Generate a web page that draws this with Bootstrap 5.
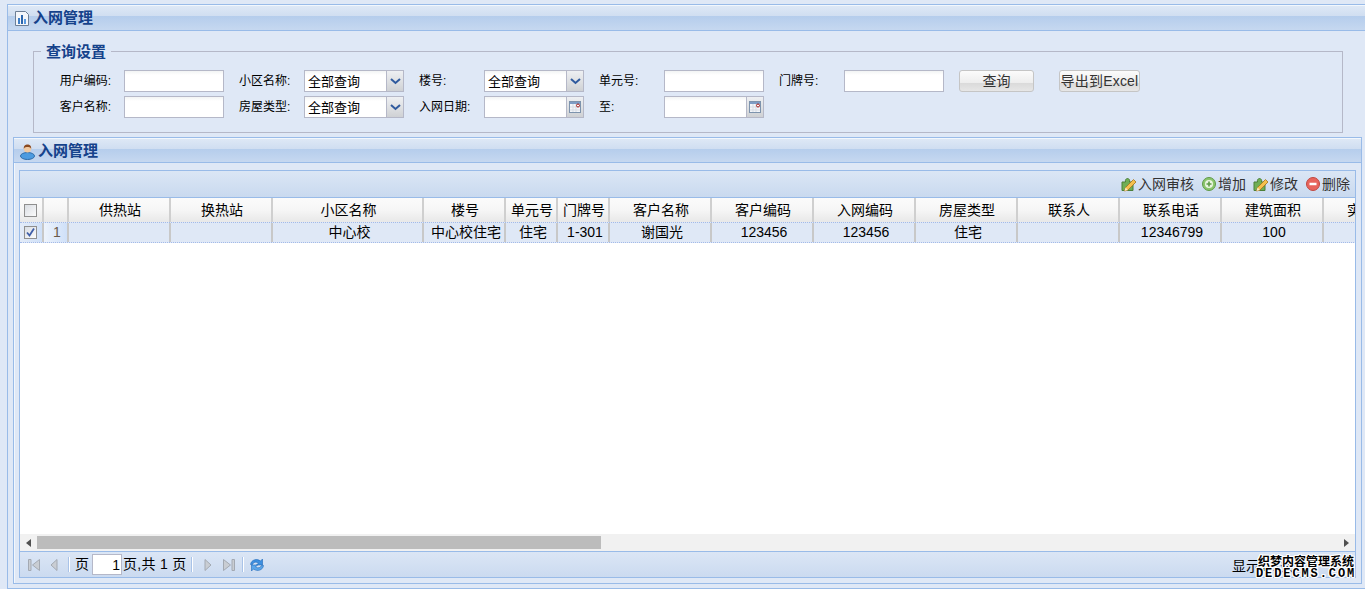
<!DOCTYPE html>
<html lang="zh">
<head>
<meta charset="UTF-8">
<title>入网管理</title>
<link rel="stylesheet" href="https://cdn.jsdelivr.net/npm/bootstrap@5.3.0/dist/css/bootstrap.min.css">
<style>
html, body { height: 589px; overflow: hidden; }
body { background: #dfe8f6; font-family: "Liberation Sans", "Noto Sans CJK SC", sans-serif; font-size: 13px; color: #000; padding: 4px 0 0 7px; position: relative; }
.panel-outer { border: 1px solid #99bbe8; border-right: 0; background: #dfe8f6; height: 585px; }
.panel-head { height: 26px; border-bottom: 1px solid #99bbe8; background: linear-gradient(#dfe9f6 0, #d0def1 44%, #b5cdec 45%, #c6d8f0 100%); box-shadow: inset 0 1px #f2f7fd; color: #15428b; font-weight: 700; font-size: 15px; gap: 3px; padding: 2px 0 0 6px; }
.query-box { margin: 20px 22px 0 25px; height: 82px; border: 1px solid #b5b8c8; position: relative; padding: 18px 0 0 24px; }
.query-title { position: absolute; left: 7px; top: -9px; padding: 0 5px; background: #dfe8f6; color: #15428b; font-weight: 700; font-size: 15px; line-height: 18px; }
.q-row { height: 26px; }
.q-label { width: 66px; font-size: 12px; line-height: 22px; flex: none; }
.q-first { text-align: right; padding-right: 13px; }
.q-next { margin-left: 14px; padding-left: 1px; }
.q-door { width: 65px; margin-left: 15px; }
.q-input { width: 100px; height: 22px; border: 1px solid #b5b8c8; background: linear-gradient(#f2f4f4, #fff 4px); flex: none; }
.q-combo { position: relative; font-size: 13px; line-height: 22px; padding-left: 3px; }
.q-trigger { position: absolute; right: 0; top: 0; bottom: 0; width: 17px; border-left: 1px solid #b5b8c8; background: linear-gradient(#eef0f3, #cfd1d4); display: flex; align-items: center; justify-content: center; }
.q-btn { height: 22px; border: 1px solid #c5c5c5; border-radius: 3px; background: linear-gradient(#fbfbfb, #ededed 60%, #dadada 61%, #e6e6e6); font-size: 14px; line-height: 20px; text-align: center; color: #333; white-space: nowrap; flex: none; }
.q-search { width: 75px; margin-left: 15px; }
.q-export { width: 81px; margin-left: 25px; letter-spacing: .2px; }
.panel-inner { margin: 4px 3px 0 5px; border: 1px solid #99bbe8; height: 447px; box-shadow: inset 1px 0 #f2f7fd; }
.panel-inner .panel-head { height: 25px; padding: 3px 0 0 6px; }
.grid-wrap { margin: 7px 5px 0 5px; border: 1px solid #99bbe8; background: #fff; height: 408px; display: flex; flex-direction: column; overflow: hidden; }
.grid-tools { height: 27px; flex: none; border-bottom: 1px solid #99bbe8; background: linear-gradient(#dbe6f5, #c9d9ef); font-size: 14px; color: #333; gap: 7px; padding-right: 5px; }
.tool-item { line-height: 27px; }
.tool-item svg { margin-right: 1px; }
.grid-body { flex: 1 1 auto; overflow: hidden; }
.g-row { display: flex; width: 1420px; height: 24px; align-items: stretch; }
.g-head { background: linear-gradient(#fbfbfb, #f6f6f6 50%, #e8e8e8); font-size: 14px; }
.g-data { height: 19px; background: #dfe8f6; border-top: 1px dotted #a3bae9; border-bottom: 1px dotted #a3bae9; font-size: 14px; box-sizing: content-box; }
.g-cell { flex: none; width: 102px; border-right: 2px solid #cfcfcf; padding-left: 2px; text-align: center; white-space: nowrap; overflow: hidden; line-height: 24px; }
.g-data .g-cell { line-height: 19px; border-right-color: #c8c8c8; padding-left: 4px; }
.g-row .w-check { width: 24px; display: flex; align-items: center; justify-content: center; padding: 0 2px 0 0; }
.g-data .w-check { background: linear-gradient(90deg, #e4ecf8, #cfe0f8); }
.w-num { width: 25px; }
.g-data .w-num { background: linear-gradient(90deg, #edf3fc, #cfe0f8); color: #6b5a4a; padding-left: 3px; }
.w-wide { width: 151px; }
.w-u { width: 82px; }
.w-d { width: 52px; }
.chk { width: 13px; height: 13px; border: 1px solid #8f8f8f; background: linear-gradient(135deg, #d9dde3, #fbfbfb); display: block; }
.scroll-bar { height: 17px; flex: none; background: #f1f1f1; }
.scroll-btn { width: 17px; flex: none; display: flex; align-items: center; justify-content: center; }
.scroll-track { flex: 1 1 auto; height: 100%; }
.scroll-thumb { width: 564px; height: 13px; margin-top: 2px; background: #bcbcbc; }
.pager { height: 26px; flex: none; border-top: 1px solid #99bbe8; background: linear-gradient(#dbe6f5, #cbdaf0); font-size: 14px; padding-left: 4px; position: relative; }
.pg-ic { width: 20px; display: flex; align-items: center; justify-content: center; flex: none; }
.pg-ic-gap { margin-left: 1px; }
.pg-sep { width: 1px; height: 15px; background: #a9c3e8; border-right: 1px solid #fff; margin: 0 5px 0 4px; box-sizing: content-box; flex: none; }
.pg-sep-end { margin: 0 3px 0 3px; }
.pg-num { width: 30px; height: 21px; border: 1px solid #b5b8c8; background: #fff; text-align: right; padding-right: 1px; line-height: 20px; margin: 0 1px 0 3px; flex: none; }
.pg-total { letter-spacing: .3px; }
.pg-info { position: absolute; left: 1212px; top: 4px; white-space: nowrap; }
.stamp { position: absolute; left: 1256px; top: 556px; width: 100px; color: #000; font-weight: 700; line-height: 12px; text-align: center; text-shadow: 1px 0 #fff, -1px 0 #fff, 0 1px #fff, 0 -1px #fff, 1px 1px #fff, -1px -1px #fff, 1px -1px #fff, -1px 1px #fff; }
.stamp-cn { font-size: 12px; }
.stamp-en { font-size: 12px; letter-spacing: 1.9px; font-family: "Liberation Mono", monospace; white-space: nowrap; }
</style>
</head>
<body>
<svg width="0" height="0" class="position-absolute">
  <defs>
    <symbol id="ic-edit" viewBox="0 0 16 16">
      <path d="M1 6h3.500C4 4 5 2.500 6.500 2.500S9 4 8.500 6H12v8.500H1z" fill="#6fae55" stroke="#4c7f38"/>
      <path d="M3.500 15l1-3.500L12.500 3.500l2.500 2.500-8 8z" fill="#f4c04e" stroke="#a5711c" stroke-width=".8"/>
      <path d="M3.500 15l1-3.500 2.500 2.500z" fill="#fbe8c0"/>
    </symbol>
    <symbol id="ic-down" viewBox="0 0 11 7"><path d="M1 1l4.500 4L10 1" fill="none" stroke="#2f5a9e" stroke-width="2"/></symbol>
    <symbol id="ic-cal" viewBox="0 0 12 12">
      <rect x=".5" y=".5" width="11" height="11" fill="#f4f6fa" stroke="#7d93ad"/>
      <rect x="1" y="1" width="10" height="2" fill="#7d9cc4"/>
      <path d="M1 6h10M1 9h10M4 3v8M7 3v8" stroke="#d5dbe3" fill="none"/>
      <circle cx="9" cy="4.500" r="1.500" fill="#fff" stroke="#a01818"/>
    </symbol>
  </defs>
</svg>
<div class="panel-outer">
  <div class="panel-head d-flex align-items-center">
    <svg width="16" height="17" viewBox="0 0 16 17"><path d="M1.500 1.500h10l3 3v11h-13z" fill="#f4f6fa" stroke="#6d7f96"/><rect x="4" y="8" width="2" height="6" fill="#3f7fc8"/><rect x="7" y="5" width="2" height="9" fill="#2c66ad"/><rect x="10" y="9" width="2" height="5" fill="#5a9adf"/></svg>
    <span>入网管理</span>
  </div>
  <div class="query-box">
    <div class="query-title">查询设置</div>
    <div class="q-row d-flex">
      <div class="q-label q-first">用户编码:</div>
      <div class="q-input"></div>
      <div class="q-label q-next">小区名称:</div>
      <div class="q-input q-combo">全部查询<span class="q-trigger"><svg width="11" height="7"><use href="#ic-down"/></svg></span></div>
      <div class="q-label q-next">楼号:</div>
      <div class="q-input q-combo">全部查询<span class="q-trigger"><svg width="11" height="7"><use href="#ic-down"/></svg></span></div>
      <div class="q-label q-next">单元号:</div>
      <div class="q-input"></div>
      <div class="q-label q-door">门牌号:</div>
      <div class="q-input"></div>
      <div class="q-btn q-search">查询</div>
      <div class="q-btn q-export">导出到Excel</div>
    </div>
    <div class="q-row d-flex">
      <div class="q-label q-first">客户名称:</div>
      <div class="q-input"></div>
      <div class="q-label q-next">房屋类型:</div>
      <div class="q-input q-combo">全部查询<span class="q-trigger"><svg width="11" height="7"><use href="#ic-down"/></svg></span></div>
      <div class="q-label q-next">入网日期:</div>
      <div class="q-input q-combo"><span class="q-trigger"><svg width="12" height="12"><use href="#ic-cal"/></svg></span></div>
      <div class="q-label q-next">至:</div>
      <div class="q-input q-combo"><span class="q-trigger"><svg width="12" height="12"><use href="#ic-cal"/></svg></span></div>
    </div>
  </div>
  <div class="panel-inner">
    <div class="panel-head d-flex align-items-center">
      <svg width="15" height="16" viewBox="0 0 15 16"><ellipse cx="7.500" cy="12" rx="7" ry="3.500" fill="#4c9be0" stroke="#2f6ca8"/><circle cx="7.500" cy="5" r="3.500" fill="#f1c9a0"/><path d="M3.800 5C3.500 1.500 5.500.5 7.500.5s4 1 3.700 4.500C10.500 3 8.500 3 7.500 3s-3 0-3.700 2z" fill="#8a4a20"/></svg>
      <span>入网管理</span>
    </div>
    <div class="grid-wrap">
      <div class="grid-tools d-flex align-items-center justify-content-end">
        <span class="tool-item d-flex align-items-center"><svg width="16" height="16"><use href="#ic-edit"/></svg>入网审核</span>
        <span class="tool-item d-flex align-items-center"><svg width="16" height="16" viewBox="0 0 16 16"><circle cx="8" cy="8" r="6.500" fill="#8cc66e" stroke="#5f9a48"/><circle cx="8" cy="8" r="4" fill="#eaf5e2"/><path d="M8 5.500v5M5.500 8h5" stroke="#5f9a48" stroke-width="1.600"/></svg>增加</span>
        <span class="tool-item d-flex align-items-center"><svg width="16" height="16"><use href="#ic-edit"/></svg>修改</span>
        <span class="tool-item d-flex align-items-center"><svg width="16" height="16" viewBox="0 0 16 16"><circle cx="8" cy="8" r="6.500" fill="#e8645c" stroke="#c04840"/><path d="M4.500 8h7" stroke="#fff" stroke-width="2.500"/></svg>删除</span>
      </div>
      <div class="grid-body">
        <div class="g-row g-head">
          <div class="g-cell w-check"><span class="chk"></span></div>
          <div class="g-cell w-num"></div>
          <div class="g-cell">供热站</div><div class="g-cell">换热站</div><div class="g-cell w-wide">小区名称</div><div class="g-cell w-u">楼号</div><div class="g-cell w-d">单元号</div><div class="g-cell w-d">门牌号</div><div class="g-cell">客户名称</div><div class="g-cell">客户编码</div><div class="g-cell">入网编码</div><div class="g-cell">房屋类型</div><div class="g-cell">联系人</div><div class="g-cell">联系电话</div><div class="g-cell">建筑面积</div><div class="g-cell">实际面积</div>
        </div>
        <div class="g-row g-data">
          <div class="g-cell w-check"><span class="chk"><svg class="d-block" width="11" height="11" viewBox="0 0 11 11"><path d="M2 5.500l2.500 3L9 1.500" fill="none" stroke="#3f5ea8" stroke-width="1.800"/></svg></span></div>
          <div class="g-cell w-num">1</div>
          <div class="g-cell"></div><div class="g-cell"></div><div class="g-cell w-wide">中心校</div><div class="g-cell w-u">中心校住宅</div><div class="g-cell w-d">住宅</div><div class="g-cell w-d">1-301</div><div class="g-cell">谢国光</div><div class="g-cell">123456</div><div class="g-cell">123456</div><div class="g-cell">住宅</div><div class="g-cell"></div><div class="g-cell">12346799</div><div class="g-cell">100</div><div class="g-cell"></div>
        </div>
      </div>
      <div class="scroll-bar d-flex">
        <div class="scroll-btn"><svg width="6" height="8" viewBox="0 0 6 8"><path d="M5 0v8L0 4z" fill="#505050"/></svg></div>
        <div class="scroll-track"><div class="scroll-thumb"></div></div>
        <div class="scroll-btn"><svg width="6" height="8" viewBox="0 0 6 8"><path d="M0 0v8l5-4z" fill="#505050"/></svg></div>
      </div>
      <div class="pager d-flex align-items-center">
        <span class="pg-ic"><svg width="12" height="12" viewBox="0 0 12 12"><path d="M.5.5h2.500v11H.5zM11.500.5v11L4.500 6z" fill="#c9cdd3" stroke="#a3a9b2"/></svg></span>
        <span class="pg-ic"><svg width="8" height="12" viewBox="0 0 8 12"><path d="M7 .5v11L1 6z" fill="#c9cdd3" stroke="#a3a9b2"/></svg></span>
        <span class="pg-sep"></span>
        <span>页</span><span class="pg-num">1</span><span class="pg-total">页,共 1 页</span>
        <span class="pg-sep"></span>
        <span class="pg-ic"><svg width="8" height="12" viewBox="0 0 8 12"><path d="M1 .5v11L7 6z" fill="#c9cdd3" stroke="#a3a9b2"/></svg></span>
        <span class="pg-ic pg-ic-gap"><svg width="12" height="12" viewBox="0 0 12 12"><path d="M.5.5v11L7.500 6zM9 .5h2.500v11H9z" fill="#c9cdd3" stroke="#a3a9b2"/></svg></span>
        <span class="pg-sep pg-sep-end"></span>
        <span class="pg-ic"><svg width="16" height="16" viewBox="0 0 16 16"><path d="M1.500 7.500C2 3 7.500 1 11.500 4l2-2v6H7.500l2-2C7 4.500 4.500 5 3.500 7.500z" fill="#3d8fdf" stroke="#1f68b8" stroke-width=".6"/><path d="M14.500 8.500C14 13 8.500 15 4.500 12l-2 2V8h6l-2 2c2.500 1.500 5 1 6-1.500z" fill="#5aa6ea" stroke="#1f68b8" stroke-width=".6"/></svg></span>
        <span class="pg-info">显示1-1条</span>
      </div>
    </div>
  </div>
</div>
<div class="stamp"><div class="stamp-cn">织梦内容管理系统</div><div class="stamp-en">DEDECMS.COM</div></div>
</body>
</html>
